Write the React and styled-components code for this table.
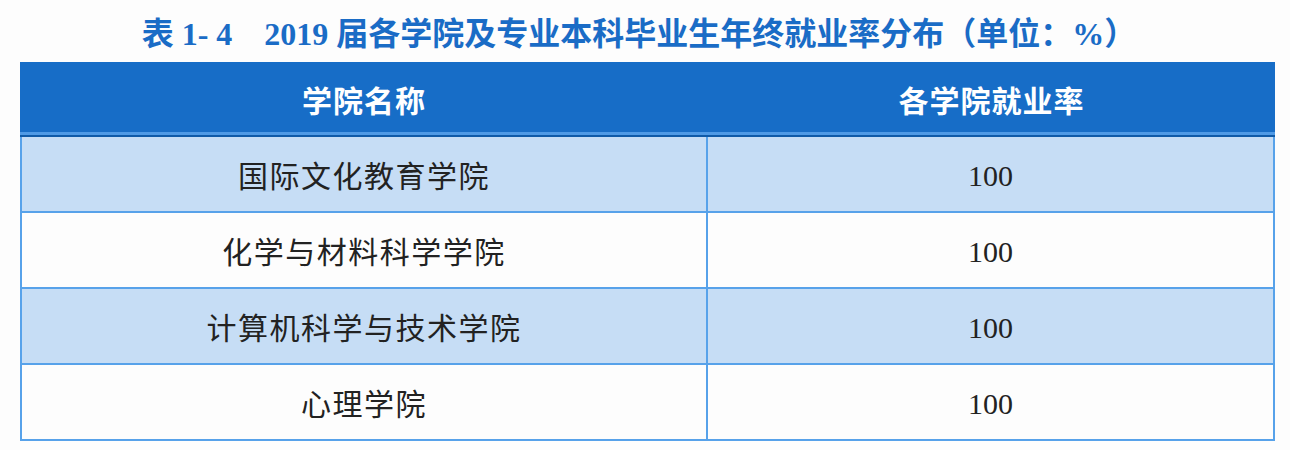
import React from 'react';
import styled, { createGlobalStyle } from 'styled-components';

const GlobalStyle = createGlobalStyle`
  *, *::before, *::after {
    box-sizing: border-box;
  }
  body {
    margin: 0;
    background: #fdfdfd;
    font-family: "Noto Sans CJK SC", sans-serif;
  }
`;

const Page = styled.div`
  width: 1290px;
  height: 450px;
  overflow: hidden;
  display: flex;
  flex-direction: column;
`;

const Title = styled.h1`
  margin: 0;
  height: 62px;
  display: flex;
  align-items: center;
  justify-content: center;
  padding-right: 12px;
  font-family: "Liberation Serif", "Noto Sans CJK SC", serif;
  font-weight: 700;
  font-size: 32px;
  color: #1a6cc6;
  white-space: pre;
`;

const Table = styled.div`
  margin-left: 20px;
  width: 1255px;
  display: grid;
  grid-template-columns: 684px 1fr;
  border: 2px solid #57a2ea;
  border-top: none;
  background: #fdfdfd;
`;

const HeadCell = styled.div`
  height: 75px;
  display: flex;
  align-items: center;
  justify-content: center;
  background: #176dc7;
  color: #fff;
  font-family: "Noto Sans CJK SC", sans-serif;
  font-weight: 700;
  font-size: 30px;
  letter-spacing: 1px;
  border-bottom: 2px solid #0f5aa8;
  margin: 0 -2px;
  padding-left: ${p => (p.$first ? '0' : '4px')};
  box-shadow: inset 0 -3px 0 #4f9ae6;
`;

const Cell = styled.div`
  height: ${p => (p.$firstRow ? '74px' : '76px')};
  display: flex;
  align-items: center;
  justify-content: center;
  background: ${p => (p.$shaded ? '#c6ddf5' : '#fdfdfd')};
  border-top: ${p => (p.$firstRow ? 'none' : '2px solid #57a2ea')};
  border-left: ${p => (p.$right ? '2px solid #57a2ea' : 'none')};
  color: #222;
  font-family: ${p => (p.$num ? '"Liberation Serif", serif' : '"Noto Sans CJK SC", sans-serif')};
  font-size: 30px;
  letter-spacing: ${p => (p.$num ? '0' : '1.5px')};
  font-weight: 400;
`;

const Value = styled.span`
  display: block;
  margin-top: 3px;
`;

const rows = [
  { name: '国际文化教育学院', rate: '100' },
  { name: '化学与材料科学学院', rate: '100' },
  { name: '计算机科学与技术学院', rate: '100' },
  { name: '心理学院', rate: '100' },
];

export default function App() {
  return (
    <Page>
      <GlobalStyle />
      <Title>表 1- 4{'    '}2019 届各学院及专业本科毕业生年终就业率分布（单位：%）</Title>
      <Table>
        <HeadCell $first>学院名称</HeadCell>
        <HeadCell>各学院就业率</HeadCell>
        {rows.map((row, i) => (
          <React.Fragment key={row.name}>
            <Cell $shaded={i % 2 === 0} $firstRow={i === 0}>{row.name}</Cell>
            <Cell $shaded={i % 2 === 0} $firstRow={i === 0} $right $num>
              <Value>{row.rate}</Value>
            </Cell>
          </React.Fragment>
        ))}
      </Table>
    </Page>
  );
}
